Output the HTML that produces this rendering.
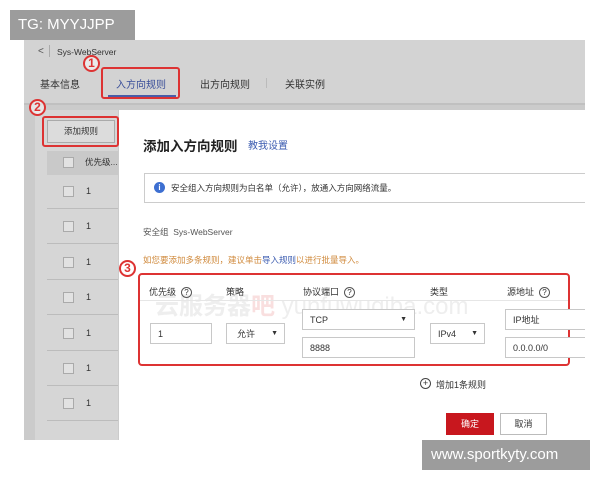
<!DOCTYPE html>
<html><head><meta charset="utf-8"><style>
*{margin:0;padding:0;box-sizing:border-box}
body{width:600px;height:480px;background:#fff;position:relative;overflow:hidden;font-family:"Liberation Sans","Noto Sans CJK SC",sans-serif;color:#333}
.a{position:absolute;white-space:nowrap}
.inp{position:absolute;border:1px solid #c8c8c8;background:#fff;font-size:9px;padding-left:7px;display:flex;align-items:center}
.cb{position:absolute;width:11px;height:11px;border:1px solid #aaa;background:#e2e2e2}
.circ{position:absolute;width:17px;height:17px;border:2px solid #d33;border-radius:50%;color:#d33;font-weight:bold;font-size:12px;text-align:center;line-height:13px;background:rgba(255,255,255,.5)}
.q{display:inline-block;width:11px;height:11px;border:1px solid #555;border-radius:50%;font-size:8px;line-height:9px;text-align:center;margin-left:5px;vertical-align:middle}
.line{position:absolute;height:1px;background:#bcbcbc}
</style></head><body>
<div class="a" style="left:10px;top:10px;width:125px;height:30px;background:#9c9c9c;color:#fff;font-size:15px;line-height:30px;padding-left:8px">TG: MYYJJPP</div>
<div class="a" style="left:24px;top:40px;width:561px;height:400px;background:#cbcbcb"></div>
<div class="a" style="left:24px;top:40px;width:561px;height:64px;background:#d3d3d3"></div>
<div class="a" style="left:24px;top:103px;width:561px;height:2px;background:#c0c0c0"></div>
<div class="a" style="left:38px;top:46px;font-size:10px;color:#555">&lt;</div>
<div class="a" style="left:49px;top:45px;width:1px;height:12px;background:#aaa"></div>
<div class="a" style="left:57px;top:47px;font-size:8.5px;color:#333">Sys-WebServer</div>
<div class="a" style="left:40px;top:76px;font-size:10px;color:#333">基本信息</div>
<div class="a" style="left:116px;top:76px;font-size:10px;color:#3a4f9a">入方向规则</div>
<div class="a" style="left:108px;top:95px;width:68px;height:2px;background:#4a5da8"></div>
<div class="a" style="left:200px;top:76px;font-size:10px;color:#333">出方向规则</div>
<div class="a" style="left:266px;top:78px;width:1px;height:10px;background:#bbb"></div>
<div class="a" style="left:285px;top:76px;font-size:10px;color:#333">关联实例</div>
<div class="a" style="left:101px;top:67px;width:79px;height:32px;border:2px solid #d33;border-radius:3px"></div>
<div class="circ" style="left:83px;top:55px">1</div>
<div class="a" style="left:35px;top:110px;width:83px;height:330px;background:#d6d6d6"></div>
<div class="a" style="left:47px;top:120px;width:68px;height:23px;background:#dcdcdc;border:1px solid #aaa;font-size:8.5px;text-align:center;line-height:21px">添加规则</div>
<div class="a" style="left:42px;top:116px;width:77px;height:31px;border:2px solid #d33;border-radius:3px"></div>
<div class="circ" style="left:29px;top:99px">2</div>
<div class="a" style="left:47px;top:151px;width:71px;height:24px;background:#c9c9c9"></div>
<div class="cb" style="left:63px;top:157px"></div><div class="a" style="left:85px;top:156px;font-size:8.5px">优先级...</div>
<div class="cb" style="left:63px;top:186px"></div><div class="a" style="left:86px;top:186px;font-size:9px">1</div>
<div class="line" style="left:47px;top:208px;width:71px"></div>
<div class="cb" style="left:63px;top:221px"></div><div class="a" style="left:86px;top:221px;font-size:9px">1</div>
<div class="line" style="left:47px;top:243px;width:71px"></div>
<div class="cb" style="left:63px;top:257px"></div><div class="a" style="left:86px;top:257px;font-size:9px">1</div>
<div class="line" style="left:47px;top:279px;width:71px"></div>
<div class="cb" style="left:63px;top:292px"></div><div class="a" style="left:86px;top:292px;font-size:9px">1</div>
<div class="line" style="left:47px;top:314px;width:71px"></div>
<div class="cb" style="left:63px;top:328px"></div><div class="a" style="left:86px;top:328px;font-size:9px">1</div>
<div class="line" style="left:47px;top:350px;width:71px"></div>
<div class="cb" style="left:63px;top:363px"></div><div class="a" style="left:86px;top:363px;font-size:9px">1</div>
<div class="line" style="left:47px;top:385px;width:71px"></div>
<div class="cb" style="left:63px;top:398px"></div><div class="a" style="left:86px;top:398px;font-size:9px">1</div>
<div class="line" style="left:47px;top:420px;width:71px"></div>
<div class="a" style="left:119px;top:110px;width:466px;height:330px;background:#fff"></div>
<div class="a" style="left:143px;top:135px;font-size:13.5px;font-weight:bold;color:#222">添加入方向规则</div>
<div class="a" style="left:248px;top:137px;font-size:10px;color:#3b5bb0">教我设置</div>
<div class="a" style="left:144px;top:173px;width:441px;height:30px;border:1px solid #ccc;border-right:none;background:#fff"></div>
<div class="a" style="left:154px;top:182px;width:11px;height:11px;border-radius:50%;background:#3d6fd1;color:#fff;font-size:8px;text-align:center;line-height:11px;font-weight:bold">i</div>
<div class="a" style="left:171px;top:182px;font-size:8.5px;color:#333">安全组入方向规则为白名单（允许），放通入方向网络流量。</div>
<div class="a" style="left:143px;top:226px;font-size:8.5px;color:#555">安全组&nbsp;&nbsp;Sys-WebServer</div>
<div class="a" style="left:143px;top:254px;font-size:8.5px;color:#d08a3c">如您要添加多条规则，建议单击<span style="color:#3b5bb0">导入规则</span>以进行批量导入。</div>
<div class="a" style="left:138px;top:273px;width:432px;height:93px;border:2px solid #d33;border-radius:4px"></div>
<div class="circ" style="left:119px;top:260px">3</div>
<div class="a" style="left:155px;top:286px;font-size:24px;font-weight:bold;color:rgba(160,160,160,.18)">云服务器<span style="color:rgba(220,80,80,.18)">吧</span> <span style="font-weight:normal">yunfuwuqiba.com</span></div>
<div class="a" style="left:149px;top:285px;font-size:9px;color:#333">优先级<span class="q">?</span></div>
<div class="a" style="left:226px;top:285px;font-size:9px;color:#333">策略</div>
<div class="a" style="left:303px;top:285px;font-size:9px;color:#333">协议端口<span class="q">?</span></div>
<div class="a" style="left:430px;top:285px;font-size:9px;color:#333">类型</div>
<div class="a" style="left:507px;top:285px;font-size:9px;color:#333">源地址<span class="q">?</span></div>
<div class="a" style="left:140px;top:300px;width:428px;height:1px;background:#e6e6e6"></div>
<div class="inp" style="left:150px;top:323px;width:62px;height:21px">1</div>
<div class="inp" style="left:226px;top:323px;width:59px;height:21px;padding-left:10px">允许<span style="position:absolute;right:6px;font-size:7px">▼</span></div>
<div class="inp" style="left:302px;top:309px;width:113px;height:21px">TCP<span style="position:absolute;right:7px;font-size:7px">▼</span></div>
<div class="inp" style="left:302px;top:337px;width:113px;height:21px">8888</div>
<div class="inp" style="left:430px;top:323px;width:55px;height:21px">IPv4<span style="position:absolute;right:6px;font-size:7px">▼</span></div>
<div class="inp" style="left:505px;top:309px;width:80px;height:21px;border-right:none">IP地址</div>
<div class="inp" style="left:505px;top:337px;width:80px;height:21px;border-right:none">0.0.0.0/0</div>
<div class="a" style="left:420px;top:378px;width:11px;height:11px;border:1px solid #444;border-radius:50%;font-size:9px;line-height:9px;text-align:center">+</div>
<div class="a" style="left:436px;top:378px;font-size:9px;color:#333">增加1条规则</div>
<div class="a" style="left:446px;top:413px;width:48px;height:22px;background:#c8171e;color:#fff;font-size:9px;text-align:center;line-height:22px">确定</div>
<div class="a" style="left:500px;top:413px;width:47px;height:22px;border:1px solid #bbb;font-size:9px;text-align:center;line-height:20px">取消</div>
<div class="a" style="left:422px;top:440px;width:168px;height:30px;background:#9c9c9c;color:#fff;font-size:15px;line-height:30px;padding-left:9px">www.sportkyty.com</div>
</body></html>
